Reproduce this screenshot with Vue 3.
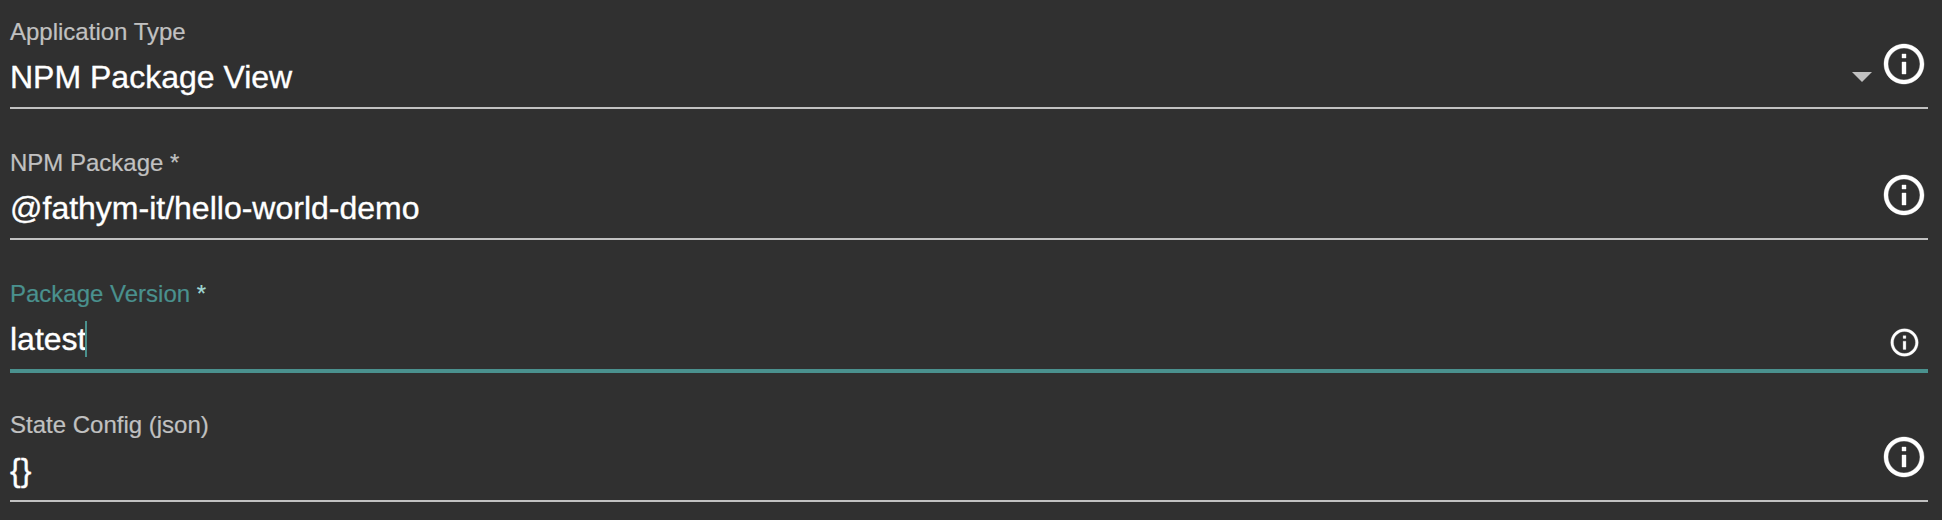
<script setup>
const fields = [
  { label: 'Application Type', value: 'NPM Package View', select: true },
  { label: 'NPM Package', required: true, value: '@fathym-it/hello-world-demo' },
  { label: 'Package Version', required: true, value: 'latest', focused: true },
  { label: 'State Config (json)', value: '{}' },
]
</script>

<template>
  <main class="form">
    <section v-for="f in fields" :key="f.label" class="field" :class="{ focused: f.focused }">
      <div class="body">
        <div class="text">
          <div class="label">{{ f.label }}<span v-if="f.required" class="star"> *</span></div>
          <div class="value"><span>{{ f.value }}</span><i v-if="f.focused" class="caret"></i></div>
        </div>
        <svg v-if="f.select" class="arrow" viewBox="0 0 20 10"><path d="M0 0h20L10 10z" /></svg>
        <svg class="info" viewBox="0 0 24 24">
          <path d="M11 7h2v2h-2zM11 11h2v6h-2zM12 2C6.48 2 2 6.48 2 12s4.48 10 10 10 10-4.48 10-10S17.52 2 12 2zm0 18c-4.41 0-8-3.59-8-8s3.59-8 8-8 8 3.59 8 8-3.59 8-8 8z" />
        </svg>
      </div>
      <div class="line"></div>
    </section>
  </main>
</template>

<style>
body {
  background: #303030;
}
</style>

<style scoped>
.form {
  box-sizing: border-box;
  height: 520px;
  overflow: hidden;
  padding: 0 14px 0 10px;
  background: #303030;
  color: #fff;
  font-family: "Liberation Sans", Arial, sans-serif;
}
.field {
  height: 131px;
}
.body {
  display: flex;
  height: 107px;
}
.text {
  flex: 1;
  padding-top: 18px;
}
.label {
  height: 28px;
  line-height: 28px;
  font-size: 24px;
  color: #c1c1c1;
  white-space: pre;
  -webkit-text-stroke: 0.2px currentColor;
}
.value {
  display: flex;
  align-items: center;
  height: 36px;
  margin-top: 13px;
  line-height: 36px;
  font-size: 32px;
  -webkit-text-stroke: 0.35px currentColor;
}
.caret {
  width: 2px;
  height: 36px;
  margin-left: -1px;
  background: #4a918e;
}
.arrow {
  width: 20px;
  height: 10px;
  margin: 72px 8px 0 0;
  fill: #c1c1c1;
}
.info {
  width: 48px;
  height: 48px;
  margin: 40px 0 0;
  fill: #fff;
  stroke: #fff;
  stroke-width: 0.2;
}
.line {
  width: 1918px;
  height: 2px;
  background: #c1c1c1;
}
.focused .label {
  color: #4a918e;
}
.focused .star {
  color: #a0d8d5;
}
.focused .info {
  width: 33px;
  height: 33px;
  margin: 63.5px 7.5px 0 0;
}
.focused .line {
  height: 4px;
  background: #4a918e;
}
</style>
